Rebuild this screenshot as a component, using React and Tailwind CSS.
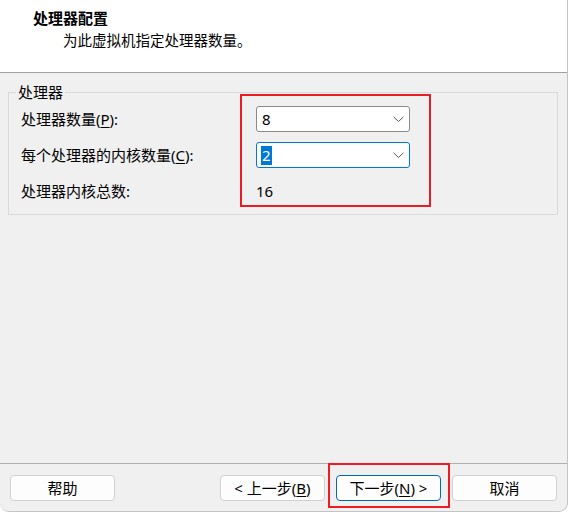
import React from "react";

const font = { fontFamily: '"Noto Sans", "Noto Sans CJK SC", sans-serif' };

function Chevron() {
  return (
    <svg width="11" height="7" viewBox="0 0 11 7" className="shrink-0">
      <polyline points="0.5,0.8 5.5,5.5 10.5,0.8" fill="none" stroke="#5a5a5a" strokeWidth="1" />
    </svg>
  );
}

function Combo({ value, focused }) {
  return (
    <div
      className={
        "w-[154px] h-[26px] bg-white rounded-[3px] border flex items-center pl-[4px] pr-[5px] " +
        (focused ? "border-[#0078d7]" : "border-[#8a8a8a]")
      }
    >
      <div className="flex-1 flex items-center">
        {focused ? (
          <span className="bg-[#0078d7] text-white leading-[19px] px-[1px]">{value}</span>
        ) : (
          <span className="leading-[19px] pl-[1px]">{value}</span>
        )}
      </div>
      <Chevron />
    </div>
  );
}

function Btn({ children, primary }) {
  return (
    <button
      className={
        "w-[105px] h-[26px] rounded-[4px] border bg-[#fdfdfd] text-[15px] leading-[20px] text-black flex items-center justify-center " +
        (primary ? "border-[#0067c0]" : "border-[#d0d0d0]")
      }
    >
      {children}
    </button>
  );
}

export default function App() {
  return (
    <div className="w-[568px] h-[512px] bg-white overflow-hidden" style={font}>
      <div className="relative w-[568px] h-[512px] bg-[#f0f0f0] rounded-b-[9px] border-r border-b border-[#c4c4c4] flex flex-col text-black">
        {/* header */}
        <div className="h-[73px] bg-white border-b border-[#a0a0a0] shrink-0">
          <div className="pl-[33px] pt-[8px] text-[15px] leading-[20px] font-bold">处理器配置</div>
          <div className="pl-[63px] pt-[2px] text-[14.5px] leading-[20px]">为此虚拟机指定处理器数量。</div>
        </div>

        {/* body */}
        <div className="flex-1 px-[8px] pt-[9px]">
          <fieldset className="w-[550px] h-[133px] border border-[#d9d9d9] pl-[12px] pr-0 pb-0 pt-[4px] m-0">
            <legend className="ml-[-5px] px-[2px] text-[15px] leading-[20px]">处理器</legend>
            <div className="flex flex-col gap-[10px] text-[15px]">
              <div className="flex items-center h-[26px]">
                <div className="w-[235px]">
                  处理器数量(<span className="underline underline-offset-2">P</span>):
                </div>
                <Combo value="8" />
              </div>
              <div className="flex items-center h-[26px]">
                <div className="w-[235px]">
                  每个处理器的内核数量(<span className="underline underline-offset-2">C</span>):
                </div>
                <Combo value="2" focused />
              </div>
              <div className="flex items-center h-[26px]">
                <div className="w-[235px]">处理器内核总数:</div>
                <div>16</div>
              </div>
            </div>
          </fieldset>
        </div>

        {/* footer */}
        <div className="h-[48px] shrink-0 border-t border-[#b0b0b0] flex items-start pt-[11px] pl-[10px] pr-[10px]">
          <Btn>帮助</Btn>
          <div className="flex-1" />
          <div className="flex gap-[11px]">
            <Btn>
              &lt; 上一步(<span className="underline underline-offset-2">B</span>)
            </Btn>
            <Btn primary>
              下一步(<span className="underline underline-offset-2">N</span>) &gt;
            </Btn>
            <Btn>取消</Btn>
          </div>
        </div>

        {/* annotations */}
        <div className="absolute left-[240px] top-[94px] w-[191px] h-[113px] border-2 border-[#ec1c24]" />
        <div className="absolute left-[328px] top-[463px] w-[122px] h-[45px] border-2 border-[#ec1c24]" />
      </div>
    </div>
  );
}
